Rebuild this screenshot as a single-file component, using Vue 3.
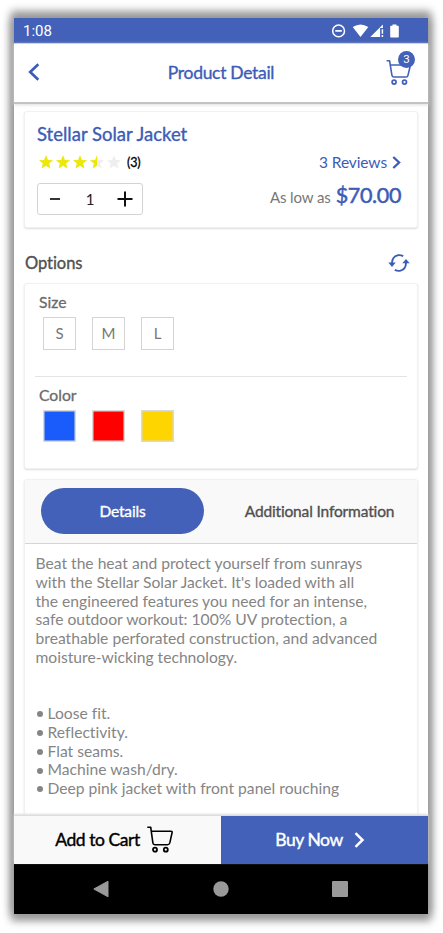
<script setup>
import { ref } from 'vue'

const quantity = ref(1)
const activeTab = ref('Details')
const tabs = ['Details', 'Additional Information']
const sizes = ['S', 'M', 'L']
const colors = ['blue', 'red', 'gold']
const stars = [100, 100, 100, 50, 0]
const description = [
  'Beat the heat and protect yourself from sunrays',
  "with the Stellar Solar Jacket. It's loaded with all",
  'the engineered features you need for an intense,',
  'safe outdoor workout: 100% UV protection, a',
  'breathable perforated construction, and advanced',
  'moisture-wicking technology.'
]
const features = ['Loose fit.', 'Reflectivity.', 'Flat seams.', 'Machine wash/dry.', 'Deep pink jacket with front panel rouching']
const starPath = 'M7 0.3 L8.9 5 L14 5.3 L10.1 8.5 L11.4 13.5 L7 10.7 L2.6 13.5 L3.9 8.5 L0 5.3 L5.1 5 Z'
</script>

<template>
  <div class="stage">
    <div class="phone">
      <div class="status">
        <span class="clock">1:08</span>
        <svg class="status-icons" width="68" height="16" viewBox="0 0 68 16">
          <circle cx="6.6" cy="7.9" r="5.9" fill="none" stroke="#fff" stroke-width="1.5" />
          <path d="M3.3 7.9h6.6" stroke="#fff" stroke-width="1.7" />
          <path d="M20.700 4.100Q28.500 -1.200 36.300 4.100L28.500 14Z" fill="#fff" />
          <path d="M38.300 14L50.900 1.500V5H48.100V14Z" fill="#fff" />
          <path d="M50.400 6.300v4.500M50.400 12.100v2" stroke="#fff" stroke-width="1.5" />
          <path d="M60.500 2.800V1.400h4v1.400h1.600q.7 0 .7.7v10.300q0 .7-.7.7h-7.200q-.7 0-.7-.7V3.500q0-.7.7-.7z" fill="#fff" />
        </svg>
      </div>

      <header class="header">
        <svg class="back" width="12" height="18" viewBox="0 0 12 18"><path d="M10.300 1.300L2.200 9L10.300 16.700" fill="none" stroke="currentColor" stroke-width="2.700" /></svg>
        <h1 class="page-title">Product Detail</h1>
        <div class="cart">
          <svg width="26" height="27" viewBox="0 0 26 27" fill="none" stroke="currentColor" stroke-width="1.6" stroke-linejoin="round">
            <path d="M0.600 1.800H3.600L5.900 16.100Q6.200 18 8 18H20.200Q21.600 18 21.900 16.600L24.500 6H4.300" />
            <circle cx="8.100" cy="23.100" r="2" stroke-width="1.700" />
            <circle cx="18.500" cy="23.100" r="2" stroke-width="1.700" />
          </svg>
          <span class="badge">3</span>
        </div>
      </header>

      <main class="content">
        <section class="card product">
          <h2 class="name">Stellar Solar Jacket</h2>
          <div class="row rating-row">
            <div class="stars">
              <span v-for="(fill, i) in stars" :key="i" class="star">
                <svg width="14" height="14" viewBox="0 0 14 14">
                  <path :d="starPath" fill="#eee" />
                  <svg :width="14 * fill / 100" height="14"><path :d="starPath" fill="#ece80a" /></svg>
                </svg>
              </span>
              <span class="count">(3)</span>
            </div>
            <div class="reviews">
              <span>3 Reviews</span>
              <svg width="9" height="13" viewBox="0 0 9 13"><path d="M1.300 1L7.100 6.500L1.300 12" fill="none" stroke="currentColor" stroke-width="2.300" /></svg>
            </div>
          </div>
          <div class="row buy-row">
            <div class="stepper">
              <svg width="16" height="16" viewBox="0 0 16 16" @click="quantity--"><path d="M3 8h10" stroke="#111" stroke-width="1.700" /></svg>
              <span class="qty">{{ quantity }}</span>
              <svg width="16" height="16" viewBox="0 0 16 16" @click="quantity++"><path d="M0.500 8h15M8 0.500v15" stroke="#111" stroke-width="2" /></svg>
            </div>
            <div class="price"><span class="low">As low as</span><span class="amount">$70.00</span></div>
          </div>
        </section>

        <div class="options-head">
          <h3 class="options-title">Options</h3>
          <svg width="22" height="18" viewBox="0 0 22 18" fill="none" stroke="currentColor" stroke-width="1.900">
            <path d="M15.200 2.200Q12.600 0.800 9.600 1.300Q4.200 2.600 4 9M6.800 15.800Q9.400 17.200 12.400 16.700Q17.800 15.400 18 9" />
            <path d="M0.300 8.600H7.700L4 12.900ZM14.300 9.300L18 5L21.700 9.300Z" fill="currentColor" stroke="none" />
          </svg>
        </div>

        <section class="card options">
          <div class="option">
            <div class="label">Size</div>
            <div class="choices">
              <span v-for="size in sizes" :key="size" class="choice">{{ size }}</span>
            </div>
          </div>
          <div class="divider"></div>
          <div class="option">
            <div class="label">Color</div>
            <div class="choices">
              <span v-for="color in colors" :key="color" class="choice swatch" :class="color"></span>
            </div>
          </div>
        </section>

        <section class="card info">
          <nav class="tabs">
            <button v-for="tab in tabs" :key="tab" class="tab" :class="{ active: tab === activeTab }" @click="activeTab = tab"><span>{{ tab }}</span></button>
          </nav>
          <div class="copy">
            <p class="description"><span v-for="(line, i) in description" :key="i" class="line">{{ line }}</span></p>
            <ul class="features"><li v-for="feature in features" :key="feature">{{ feature }}</li></ul>
          </div>
        </section>
      </main>

      <footer class="actions">
        <button class="action add">
          <span>Add to Cart</span>
          <svg width="26" height="27" viewBox="0 0 26 27" fill="none" stroke="currentColor" stroke-width="1.600" stroke-linejoin="round">
            <path d="M0.300 1.200H3.700L5.900 17Q6.100 18.700 7.900 18.700H20.500Q22.300 18.700 22.800 16.900L25.100 6.600Q25.300 5.300 24 5.300H4.300" />
            <circle cx="8" cy="23.700" r="2" stroke-width="1.800" />
            <circle cx="18.800" cy="23.700" r="2" stroke-width="1.800" />
          </svg>
        </button>
        <button class="action buy">
          <span>Buy Now</span>
          <svg width="11" height="16" viewBox="0 0 11 16"><path d="M1.500 1.200L8.500 8L1.500 14.800" fill="none" stroke="currentColor" stroke-width="2.500" /></svg>
        </button>
      </footer>

      <div class="system-nav">
        <svg width="16" height="18" viewBox="0 0 16 18"><path d="M0.800 9L15 1.200V16.800Z" fill="#999" stroke="#999" stroke-linejoin="round" /></svg>
        <svg width="16" height="16" viewBox="0 0 16 16"><circle cx="8" cy="8" r="7.700" fill="#999" /></svg>
        <svg width="16" height="16" viewBox="0 0 16 16"><rect width="16" height="16" rx="1" fill="#999" /></svg>
      </div>
    </div>
  </div>
</template>

<style>
body {
  margin: 0;
  background: #fff;
}
</style>

<style scoped>
* {
  box-sizing: border-box;
}
h1, h2, h3, p, ul {
  margin: 0;
  padding: 0;
  font-weight: 400;
}
svg {
  display: block;
  flex: none;
}
button {
  border: 0;
  padding: 0;
  background: none;
  font: inherit;
  color: inherit;
  letter-spacing: inherit;
}
.stage {
  width: 443px;
  height: 933px;
  padding: 18px 14px 0;
  overflow: hidden;
  font-family: Lato, sans-serif;
  font-variant-ligatures: none;
  white-space: nowrap;
}
.phone {
  display: flex;
  flex-direction: column;
  width: 414px;
  height: 896px;
  background: #fff;
  box-shadow: 0 -4px 8px 3px #999, 0 4px 8px 3px #999;
}
.status {
  flex: none;
  height: 25px;
  display: flex;
  align-items: center;
  justify-content: space-between;
  padding: 0 28px 0 9px;
  background: #4361b8;
  color: #fff;
}
.clock {
  padding-top: 2px;
  font: 15px/25px Roboto, sans-serif;
}
.header {
  flex: none;
  position: relative;
  z-index: 1;
  height: 61px;
  display: flex;
  align-items: center;
  justify-content: space-between;
  padding: 0 16px 2px 14px;
  border-top: 1px solid #cbd4ec;
  border-bottom: 2px solid #c3c3c3;
  box-shadow: 0 1px 3px #ddd;
  color: #3c5cb7;
}
.page-title {
  font-size: 17.500px;
  line-height: 24px;
  padding-left: 16px;
  padding-top: 1px;
  letter-spacing: -0.300px;
  -webkit-text-stroke: 0.350px;
}
.cart {
  position: relative;
  width: 26px;
  height: 27px;
  color: #4361b8;
}
.badge {
  position: absolute;
  left: 12px;
  top: -8px;
  width: 17px;
  height: 17px;
  border-radius: 50%;
  background: #4361b8;
  color: #fff;
  font: 11.500px/17px Roboto, sans-serif;
  text-align: center;
}
.content {
  flex: 1;
  min-height: 0;
  padding: 7px 10px 0;
  overflow: hidden;
}
.card {
  border: 1px solid #f1f1f1;
  border-radius: 3px;
  background: #fff;
  box-shadow: 0 1px 2px #ddd;
}
.product {
  height: 117px;
  padding: 10px 16px 0 12px;
}
.name {
  font-size: 18.500px;
  line-height: 24px;
  color: #3c5cb7;
  -webkit-text-stroke: 0.350px;
}
.row {
  display: flex;
  justify-content: space-between;
}
.rating-row {
  height: 20px;
  margin-top: 6px;
  align-items: center;
}
.stars {
  display: flex;
  align-items: center;
  gap: 3px;
  padding-left: 2px;
}
.count {
  padding-left: 3px;
  font-size: 12.500px;
  letter-spacing: -0.200px;
  color: #000;
  -webkit-text-stroke: 0.300px;
}
.reviews {
  display: flex;
  align-items: center;
  gap: 5px;
  font-size: 15.500px;
  letter-spacing: -0.100px;
  color: #3c5cb7;
}
.buy-row {
  margin-top: 11px;
}
.stepper {
  display: flex;
  align-items: center;
  justify-content: space-between;
  width: 106px;
  height: 32px;
  padding: 0 9px;
  border: 1px solid #d3d3d3;
  border-radius: 3px;
}
.qty {
  font-size: 15px;
  color: #222;
}
.price {
  display: flex;
  align-items: baseline;
  gap: 5px;
  height: 26px;
  margin-top: -1px;
  line-height: 26px;
}
.low {
  font-size: 15px;
  letter-spacing: -0.100px;
  color: #777;
}
.amount {
  font-size: 21.500px;
  letter-spacing: -0.350px;
  color: #3c5cb7;
  -webkit-text-stroke: 0.500px;
}
.options-head {
  display: flex;
  align-items: center;
  justify-content: space-between;
  height: 55px;
  padding: 14px 8px 0 1px;
  color: #3c5cb7;
}
.options-title {
  font-size: 16.500px;
  letter-spacing: -0.050px;
  color: #505050;
  -webkit-text-stroke: 0.350px;
}
.options {
  height: 186px;
  padding: 9px 10px 0;
}
.option {
  padding-left: 4px;
}
.label {
  height: 21px;
  font-size: 15.700px;
  line-height: 19px;
  color: #6b6b6b;
  -webkit-text-stroke: 0.300px;
}
.choices {
  display: flex;
  gap: 16px;
  margin-top: 3px;
  padding-left: 4px;
}
.choice {
  width: 33px;
  height: 33px;
  border: 1px solid #d4d4d4;
  font-size: 15px;
  line-height: 31px;
  text-align: center;
  color: #777;
}
.swatch {
  height: 32px;
  border-width: 1.500px;
  border: 1px solid #d9d9d9;
  box-shadow: inset 0 0 0 0.500px #d9d9d9;
}
.blue { background: #195cfb; }
.red { background: #f00; }
.gold { background: #ffd500; }
.divider {
  height: 1px;
  margin: 26px 0 9px;
  background: #e4e4e4;
}
.info {
  height: 400px;
  margin-top: 10px;
}
.tabs {
  display: flex;
  height: 64px;
  padding: 8px 16px 0;
  border-bottom: 1px solid #d5d5d5;
  background: #f9f9f9;
  color: #505050;
  font-size: 15.500px;
  letter-spacing: -0.150px;
}
.tab {
  flex: 1;
  height: 46px;
  border-radius: 23px;
  -webkit-text-stroke: 0.350px;
}
.tab.active {
  flex: 0 0 163px;
  margin-right: 34px;
  background: #4361b8;
  color: #fff;
}
.copy {
  padding: 10px 10px 0 10.500px;
  color: #858585;
  font-size: 15.650px;
  line-height: 18.750px;
}
.line {
  display: block;
}
.features {
  margin-top: 37.500px;
  list-style: none;
}
.features li {
  display: flex;
  align-items: center;
  gap: 5px;
  padding-left: 1px;
}
.features li::before {
  content: "";
  width: 6px;
  height: 6px;
  margin-top: 2px;
  border-radius: 50%;
  background: #858585;
}
.actions {
  flex: none;
  position: relative;
  display: flex;
  height: 49px;
  border-top: 1px solid #ddd;
  box-shadow: 0 -1px 2px #ddd;
  font-size: 17.500px;
  letter-spacing: -0.450px;
}
.action {
  display: flex;
  align-items: center;
  justify-content: center;
  -webkit-text-stroke: 0.400px;
}
.action span {
  margin-top: -1px;
}
.add {
  width: 207px;
  gap: 7px;
  padding-right: 7px;
  background: #f9f9f9;
  color: #000;
}
.add svg {
  margin-top: -1px;
}
.buy {
  flex: 1;
  gap: 11px;
  padding-right: 9px;
  background: #4361b8;
  color: #fff;
}
.buy svg {
  margin-top: -1px;
}
.system-nav {
  flex: none;
  display: flex;
  align-items: center;
  justify-content: space-between;
  height: 50px;
  padding: 0 80px 0 79px;
  background: #000;
}
</style>
